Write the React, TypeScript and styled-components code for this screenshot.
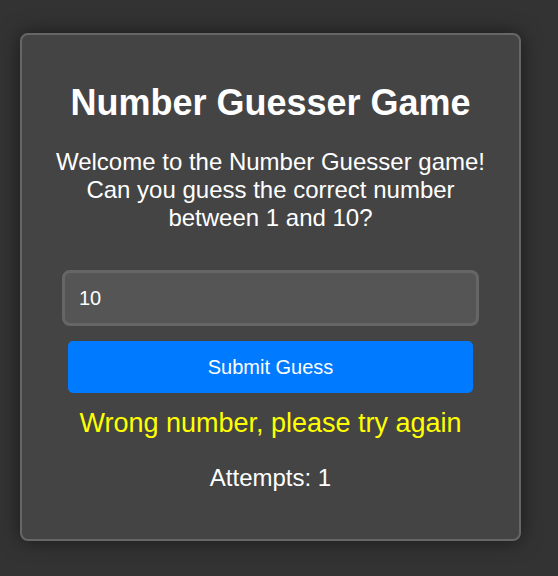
import React from "react";
import styled, { createGlobalStyle } from "styled-components";

const Global = createGlobalStyle`
  html, body { margin: 0; padding: 0; background: #333333; }
  body { font-family: "Liberation Sans", Arial, sans-serif; color: #ffffff; }
`;

const Page = styled.div`
  padding: 33px 0 0 20px;
  min-height: 576px;
  box-sizing: border-box;
`;

const Card = styled.div`
  width: 501px;
  height: 508px;
  box-sizing: border-box;
  background: #444444;
  border: 2px solid #666666;
  border-radius: 8px;
  box-shadow: 0 0 20px rgba(0, 0, 0, 0.5);
  padding: 30px 20px 0 20px;
  display: flex;
  flex-direction: column;
  align-items: center;
  text-align: center;
`;

const Title = styled.h1`
  margin: 18px 0 0;
  font-size: 36px;
  font-weight: bold;
  line-height: 40px;
`;

const Intro = styled.p`
  margin: 25px 0 0;
  font-size: 24px;
  line-height: 28px;
  white-space: nowrap;
`;

const Input = styled.input`
  margin-top: 38px;
  width: 417px;
  height: 56px;
  flex-shrink: 0;
  box-sizing: border-box;
  background: #555555;
  border: 3px solid #666666;
  border-radius: 8px;
  color: #ffffff;
  font-family: "Liberation Sans", Arial, sans-serif;
  font-size: 20px;
  padding: 0 14px;
  outline: none;
`;

const Button = styled.button`
  margin-top: 15px;
  width: 405px;
  height: 52px;
  flex-shrink: 0;
  background: #007bff;
  border: none;
  border-radius: 5px;
  color: #ffffff;
  font-family: "Liberation Sans", Arial, sans-serif;
  font-size: 20px;
`;

const Message = styled.div`
  margin-top: 14px;
  color: #ffff00;
  font-size: 27px;
  line-height: 32px;
`;

const Attempts = styled.div`
  margin-top: 25px;
  font-size: 24px;
  line-height: 28px;
`;

export default function App() {
  return (
    <>
      <Global />
      <Page>
        <Card>
          <Title>Number Guesser Game</Title>
          <Intro>
            Welcome to the Number Guesser game!
            <br />
            Can you guess the correct number
            <br />
            between 1 and 10?
          </Intro>
          <Input type="number" defaultValue="10" />
          <Button>Submit Guess</Button>
          <Message>Wrong number, please try again</Message>
          <Attempts>Attempts: 1</Attempts>
        </Card>
      </Page>
    </>
  );
}
